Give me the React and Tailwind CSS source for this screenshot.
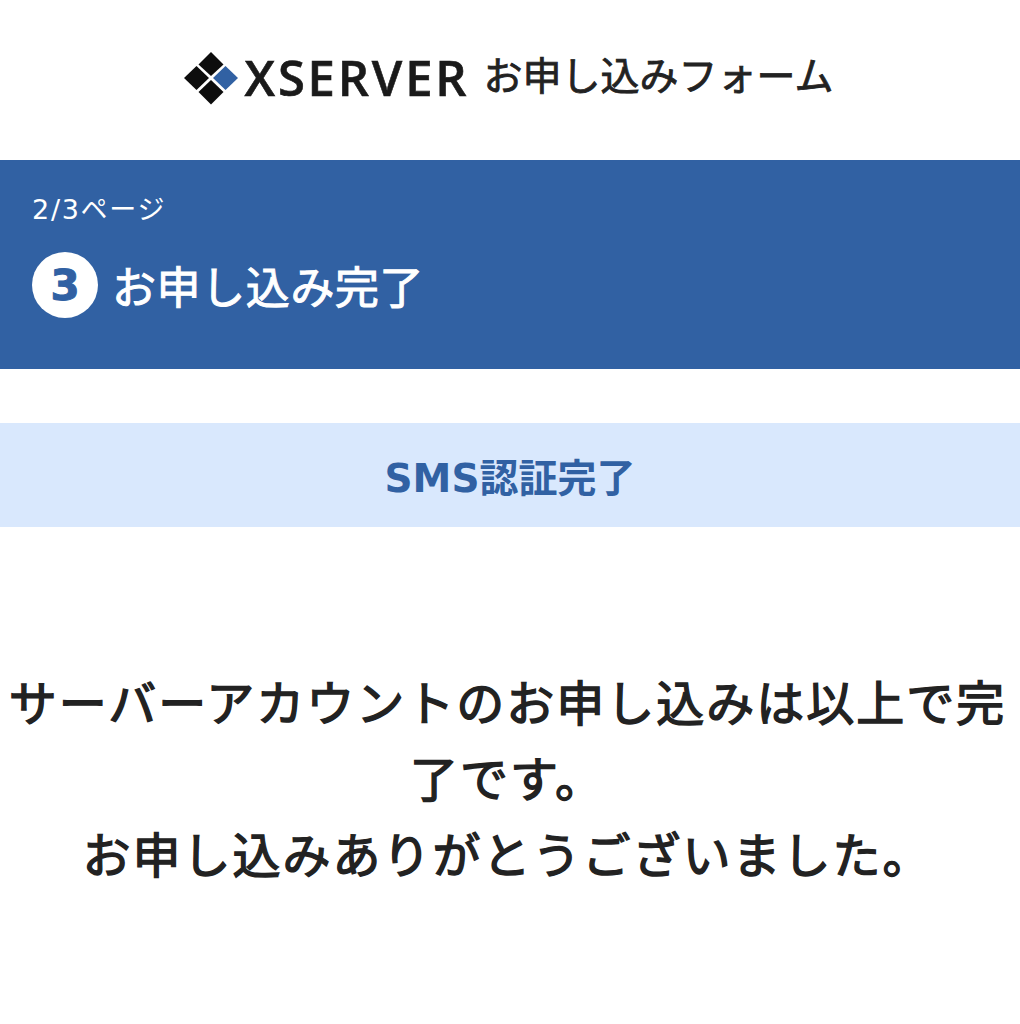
export default function App() {
  return (
    <div className="min-h-[1024px] bg-white font-['DejaVu_Sans','Noto_Sans_CJK_JP',sans-serif] text-[#222]">
      <header className="flex h-[160px] items-center justify-center pr-[4px]">
        <svg width="56" height="56" viewBox="0 0 56 56" className="mr-[6px] mt-[-5px]">
          <path d="M28 2 L40.5 14.5 L28 26 L15.5 14.5Z" fill="#0d0d0d" />
          <path d="M13.5 16 L26 28 L13.5 40 L1 28Z" fill="#0d0d0d" />
          <path d="M28 30 L40.5 42 L28 54.5 L15.5 42Z" fill="#0d0d0d" />
          <path d="M42.5 16 L55 28 L42.5 40 L30 28Z" fill="#3161a3" />
        </svg>
        <span className="mt-[-5px] w-[224px] whitespace-nowrap text-[49px] font-semibold leading-none tracking-[2.8px] text-[#1a1a1a] font-['Open_Sans',sans-serif] [-webkit-text-stroke:0.6px_#1a1a1a]">XSERVER</span>
        <span className="ml-[15px] mt-[-14px] whitespace-nowrap text-[39px] leading-none font-['Noto_Sans_CJK_JP',sans-serif] [-webkit-text-stroke:0.8px_#222]">お申し込みフォーム</span>
      </header>
      <section className="h-[209px] bg-[#3161a3] px-[32px] pt-[33px] text-white">
        <div className="text-[27px] leading-[34px] tracking-[1.7px] font-['DejaVu_Sans','Noto_Sans_CJK_JP',sans-serif]">2/3ページ</div>
        <div className="mt-[25px] flex items-center gap-[14px]">
          <div className="flex h-[66px] w-[66px] items-center justify-center rounded-full bg-white text-[42px] font-bold text-[#3161a3] [-webkit-text-stroke:1px_#3161a3]">3</div>
          <h1 className="text-[44px] leading-none tracking-[0.6px] font-['Noto_Sans_CJK_JP',sans-serif] [-webkit-text-stroke:1px_#fff]">お申し込み完了</h1>
        </div>
      </section>
      <section className="mt-[54px] flex h-[104px] items-center justify-center bg-[#d9e8fd] pt-[8px] text-[39px] font-bold text-[#3161a3]">
        SMS認証完了
      </section>
      <p className="mt-[135px] pr-[5px] text-center text-[48px] leading-[76px] tracking-[2px] font-['Noto_Sans_CJK_JP',sans-serif] [-webkit-text-stroke:1.4px_#222]">
        サーバーアカウントのお申し込みは以上で完了です。<br />お申し込みありがとうございました。
      </p>
    </div>
  );
}
